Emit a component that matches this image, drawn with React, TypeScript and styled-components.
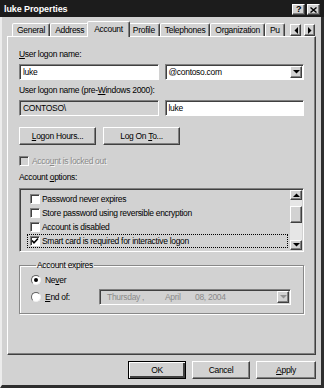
import React from 'react';
import styled, {createGlobalStyle, css} from 'styled-components';

const face = '#d2d2d2';

const GlobalStyle = createGlobalStyle`
	html, body {
		margin: 0;
		padding: 0;
		background: ${face};
	}
	body {
		font-family: "Liberation Sans", Arial, sans-serif;
		font-size: 8.5px;
		letter-spacing: -0.3px;
		color: #000;
	}
	* {
		box-sizing: border-box;
	}
`;

const raised = css`
	border: 1px solid;
	border-color: #fff #404040 #404040 #fff;
	box-shadow: inset -1px -1px #808080;
	background: ${face};
`;

const sunken = css`
	border: 1px solid;
	border-color: #808080 #fff #fff #808080;
	box-shadow: inset 1px 1px #404040;
`;

const Arrow = ({dir, color = '#000'}: {dir: 'up' | 'down' | 'left' | 'right'; color?: string}) => {
	const pts = {
		up: '0,4 7,4 3.5,0.5',
		down: '0,0 7,0 3.5,3.5',
		left: '4,0 4,7 0.5,3.5',
		right: '0,0 0,7 3.5,3.5',
	}[dir];
	const vertical = dir === 'up' || dir === 'down';
	return (
		<svg width={vertical ? 7 : 4} height={vertical ? 4 : 7} viewBox={vertical ? '0 0 7 4' : '0 0 4 7'}>
			<polygon points={pts} fill={color} />
		</svg>
	);
};

const App = () => {
	return (
		<>
			<GlobalStyle />
			<Window>
				<TitleBar>
					<Title>luke Properties</Title>
					<CaptionButtons>
						<CaptionButton>?</CaptionButton>
						<CaptionButton>
							<svg width='7' height='6' viewBox='0 0 7 6'>
								<path d='M0.5 0.5 L6.5 5.5 M6.5 0.5 L0.5 5.5' stroke='#000' strokeWidth='1.4' />
							</svg>
						</CaptionButton>
					</CaptionButtons>
				</TitleBar>

				<Body>
					<TabRow>
						<TabStrip>
							<Tab>General</Tab>
							<Tab>Address</Tab>
							<Tab $active>Account</Tab>
							<Tab>Profile</Tab>
							<Tab>Telephones</Tab>
							<Tab>Organization</Tab>
							<Tab>Pu</Tab>
						</TabStrip>
						<TabScroll>
							<SmallButton>
								<Arrow dir='left' />
							</SmallButton>
							<SmallButton>
								<Arrow dir='right' />
							</SmallButton>
						</TabScroll>
					</TabRow>

					<Panel>
						<Label>
							<u>U</u>ser logon name:
						</Label>
						<FieldRow>
							<Field>luke</Field>
							<Field>
								<FieldText>@contoso.com</FieldText>
								<DropButton>
									<Arrow dir='down' />
								</DropButton>
							</Field>
						</FieldRow>

						<Label $gap={5}>
							User logon name (pre-<u>W</u>indows 2000):
						</Label>
						<FieldRow>
							<Field $readOnly>CONTOSO\</Field>
							<Field>luke</Field>
						</FieldRow>

						<ButtonRow>
							<Button $w={77}>
								<span>
									<u>L</u>ogon Hours...
								</span>
							</Button>
							<Button $w={77}>
								<span>
									Log On <u>T</u>o...
								</span>
							</Button>
						</ButtonRow>

						<CheckRow $disabled>
							<Box $disabled />
							<span>
								Acco<u>u</u>nt is locked out
							</span>
						</CheckRow>

						<Label $gap={6}>
							Account <u>o</u>ptions:
						</Label>
						<ListBox>
							<ListItems>
								<ListItem>
									<Box />
									<span>Password never expires</span>
								</ListItem>
								<ListItem>
									<Box />
									<span>Store password using reversible encryption</span>
								</ListItem>
								<ListItem>
									<Box />
									<span>Account is disabled</span>
								</ListItem>
								<ListItem $focused>
									<Box>
										<svg width='8' height='8' viewBox='0 0 8 8'>
											<path d='M1 3.5 L3 5.8 L7 1.5' stroke='#000' strokeWidth='1.6' fill='none' />
										</svg>
									</Box>
									<span>Smart card is required for interactive logon</span>
								</ListItem>
							</ListItems>
							<ScrollBar>
								<SmallButton $h={10}>
									<Arrow dir='up' />
								</SmallButton>
								<Track $h={6} />
								<Thumb />
								<Track $grow />
								<SmallButton $h={10}>
									<Arrow dir='down' />
								</SmallButton>
							</ScrollBar>
						</ListBox>

						<Group>
							<Legend>Account expires</Legend>
							<RadioRow>
								<RadioLabel>
									<Radio $checked />
									<span>
										Ne<u>v</u>er
									</span>
								</RadioLabel>
							</RadioRow>
							<RadioRow $gap={3}>
								<RadioLabel $w={68}>
									<Radio />
									<span>
										<u>E</u>nd of:
									</span>
								</RadioLabel>
								<DatePicker>
									<DateText $w={35}>Thursday</DateText>
									<DateText $w={23}>,</DateText>
									<DateText $w={30}>April</DateText>
									<DateText>08, 2004</DateText>
									<DropButton $disabled>
										<Arrow dir='down' color='#909090' />
									</DropButton>
								</DatePicker>
							</RadioRow>
						</Group>
					</Panel>

					<Footer>
						<Button $w={58} $default>
							OK
						</Button>
						<Button $w={58}>Cancel</Button>
						<Button $w={60}>
							<span>
								<u>A</u>pply
							</span>
						</Button>
					</Footer>
				</Body>
			</Window>
		</>
	);
};

export default App;

const Window = styled.div`
	width: 324px;
	height: 388px;
	display: flex;
	flex-direction: column;
	background: ${face};
`;

const TitleBar = styled.div`
	height: 17px;
	flex: none;
	display: flex;
	align-items: center;
	justify-content: space-between;
	background: #1c1c1c;
	padding: 0 4px 0 4px;
`;

const Title = styled.div`
	color: #fff;
	font-weight: bold;
	font-size: 9px;
	letter-spacing: -0.1px;
`;

const CaptionButtons = styled.div`
	display: flex;
	gap: 2px;
	margin-top: 2px;
`;

const CaptionButton = styled.div`
	${raised};
	width: 13px;
	height: 11px;
	display: flex;
	align-items: center;
	justify-content: center;
	font-weight: bold;
	font-size: 9px;
	line-height: 1;
`;

const Body = styled.div`
	flex: 1;
	display: flex;
	flex-direction: column;
	border-left: 2px solid #ececec;
	border-right: 3px solid #2e2e2e;
	border-bottom: 3px solid #2e2e2e;
	padding: 4px 5px 0 5px;
`;

const TabRow = styled.div`
	position: relative;
	height: 16px;
	flex: none;
	display: flex;
	align-items: flex-end;
	padding-left: 3px;
	z-index: 1;
	margin-bottom: -1px;
`;

const TabStrip = styled.div`
	display: flex;
	align-items: flex-end;
	width: 279px;
	height: 16px;
	overflow: hidden;
	padding: 0 2px;
`;

const Tab = styled.div<{$active?: boolean}>`
	flex: none;
	height: ${(p) => (p.$active ? 16 : 13)}px;
	margin: 0 ${(p) => (p.$active ? -2 : 0)}px ${(p) => (p.$active ? 0 : 1)}px;
	padding: ${(p) => (p.$active ? '2px 6px 0' : '1px 4px 0')};
	border: 1px solid;
	border-bottom: none;
	border-color: #fff #404040 transparent #fff;
	border-radius: 2px 2px 0 0;
	box-shadow: inset -1px 0 #808080;
	background: ${face};
	position: relative;
	z-index: ${(p) => (p.$active ? 2 : 1)};
	line-height: 11px;
	white-space: nowrap;
`;

const TabScroll = styled.div`
	position: absolute;
	right: 1px;
	top: 3px;
	display: flex;
	gap: 3px;
`;

const SmallButton = styled.div<{$h?: number}>`
	${raised};
	width: ${(p) => (p.$h ? 'auto' : '11px')};
	height: ${(p) => p.$h ?? 12}px;
	flex: none;
	display: flex;
	align-items: center;
	justify-content: center;
`;

const Panel = styled.div`
	flex: 1;
	display: flex;
	flex-direction: column;
	border: 1px solid;
	border-color: #fff #404040 #404040 #fff;
	box-shadow: inset -1px -1px #808080;
	padding: 12px 11px 0 11px;
`;

const Label = styled.div<{$gap?: number}>`
	line-height: 11px;
	margin-top: ${(p) => p.$gap ?? 0}px;
	white-space: nowrap;
`;

const FieldRow = styled.div`
	display: flex;
	gap: 6px;
	margin-top: 4px;
`;

const Field = styled.div<{$readOnly?: boolean}>`
	${sunken};
	flex: 1;
	height: 16px;
	display: flex;
	align-items: center;
	padding-left: 3px;
	background: ${(p) => (p.$readOnly ? face : '#fff')};
	white-space: nowrap;
`;

const FieldText = styled.span`
	flex: 1;
`;

const DropButton = styled.div<{$disabled?: boolean}>`
	${raised};
	width: 12px;
	height: 12px;
	margin-right: 1px;
	display: flex;
	align-items: center;
	justify-content: center;
`;

const ButtonRow = styled.div`
	display: flex;
	gap: 7px;
	margin-top: 11px;
`;

const Button = styled.div<{$w: number; $default?: boolean}>`
	width: ${(p) => p.$w}px;
	height: 18px;
	display: flex;
	align-items: center;
	justify-content: center;
	background: ${face};
	border: 1px solid;
	border-color: ${(p) => (p.$default ? '#000' : '#fff #404040 #404040 #fff')};
	box-shadow: ${(p) =>
		p.$default ? 'inset 1px 1px #fff, inset -2px -2px #404040, inset -1px -1px #808080' : 'inset -1px -1px #808080'};
	white-space: nowrap;
`;

const CheckRow = styled.div<{$disabled?: boolean}>`
	display: flex;
	align-items: center;
	gap: 3px;
	height: 11px;
	margin-top: 10px;
	color: ${(p) => (p.$disabled ? '#8a8a8a' : '#000')};
	text-shadow: ${(p) => (p.$disabled ? '1px 1px #f4f4f4' : 'none')};
	white-space: nowrap;
`;

const Box = styled.div<{$disabled?: boolean}>`
	${sunken};
	width: 10px;
	height: 10px;
	flex: none;
	display: flex;
	align-items: center;
	justify-content: center;
	background: ${(p) => (p.$disabled ? face : '#fff')};
`;

const ListBox = styled.div`
	${sunken};
	height: 64px;
	margin-top: 5px;
	display: flex;
	padding: 1px;
	background: ${face};
`;

const ListItems = styled.div`
	flex: 1;
	padding-top: 2px;
	padding-left: 6px;
	padding-right: 2px;
`;

const ListItem = styled.div<{$focused?: boolean}>`
	height: 14px;
	display: flex;
	align-items: center;
	gap: 2px;
	padding-left: 3px;
	outline: ${(p) => (p.$focused ? '1px dotted #000' : 'none')};
	outline-offset: -1px;
	white-space: nowrap;
`;

const ScrollBar = styled.div`
	width: 12px;
	display: flex;
	flex-direction: column;
	background: #e6e6e6;
`;

const Track = styled.div<{$h?: number; $grow?: boolean}>`
	height: ${(p) => (p.$h ? `${p.$h}px` : 'auto')};
	flex: ${(p) => (p.$grow ? 1 : 'none')};
`;

const Thumb = styled.div`
	${raised};
	height: 17px;
	flex: none;
`;

const Group = styled.fieldset`
	margin: 8px 0 0 0;
	padding: 3px 12px 8px 11px;
	border: 1px solid #888;
	box-shadow: 1px 1px #fff, inset 1px 1px #fff;
	min-width: 0;
`;

const Legend = styled.legend`
	padding: 0 1px;
	margin-left: 5px;
	line-height: 11px;
`;

const RadioRow = styled.div<{$gap?: number}>`
	display: flex;
	align-items: center;
	margin-top: ${(p) => p.$gap ?? 0}px;
	min-height: 12px;
`;

const RadioLabel = styled.div<{$w?: number}>`
	display: flex;
	align-items: center;
	gap: 4px;
	width: ${(p) => (p.$w ? `${p.$w}px` : 'auto')};
	flex: none;
	white-space: nowrap;
`;

const Radio = styled.div<{$checked?: boolean}>`
	width: 10px;
	height: 10px;
	flex: none;
	border-radius: 50%;
	background: #fff;
	border: 1px solid;
	border-color: #606060 #f0f0f0 #f0f0f0 #606060;
	display: flex;
	align-items: center;
	justify-content: center;
	&::after {
		content: '';
		width: 4px;
		height: 4px;
		border-radius: 50%;
		background: ${(p) => (p.$checked ? '#000' : 'transparent')};
	}
`;

const DatePicker = styled.div`
	${sunken};
	width: 192px;
	height: 16px;
	display: flex;
	align-items: center;
	padding-left: 7px;
	background: ${face};
	color: #8a8a8a;
	white-space: nowrap;
`;

const DateText = styled.span<{$w?: number}>`
	width: ${(p) => (p.$w ? `${p.$w}px` : 'auto')};
	flex: ${(p) => (p.$w ? 'none' : 1)};
`;

const Footer = styled.div`
	height: 30px;
	flex: none;
	display: flex;
	align-items: center;
	justify-content: flex-end;
	gap: 6px;
`;
